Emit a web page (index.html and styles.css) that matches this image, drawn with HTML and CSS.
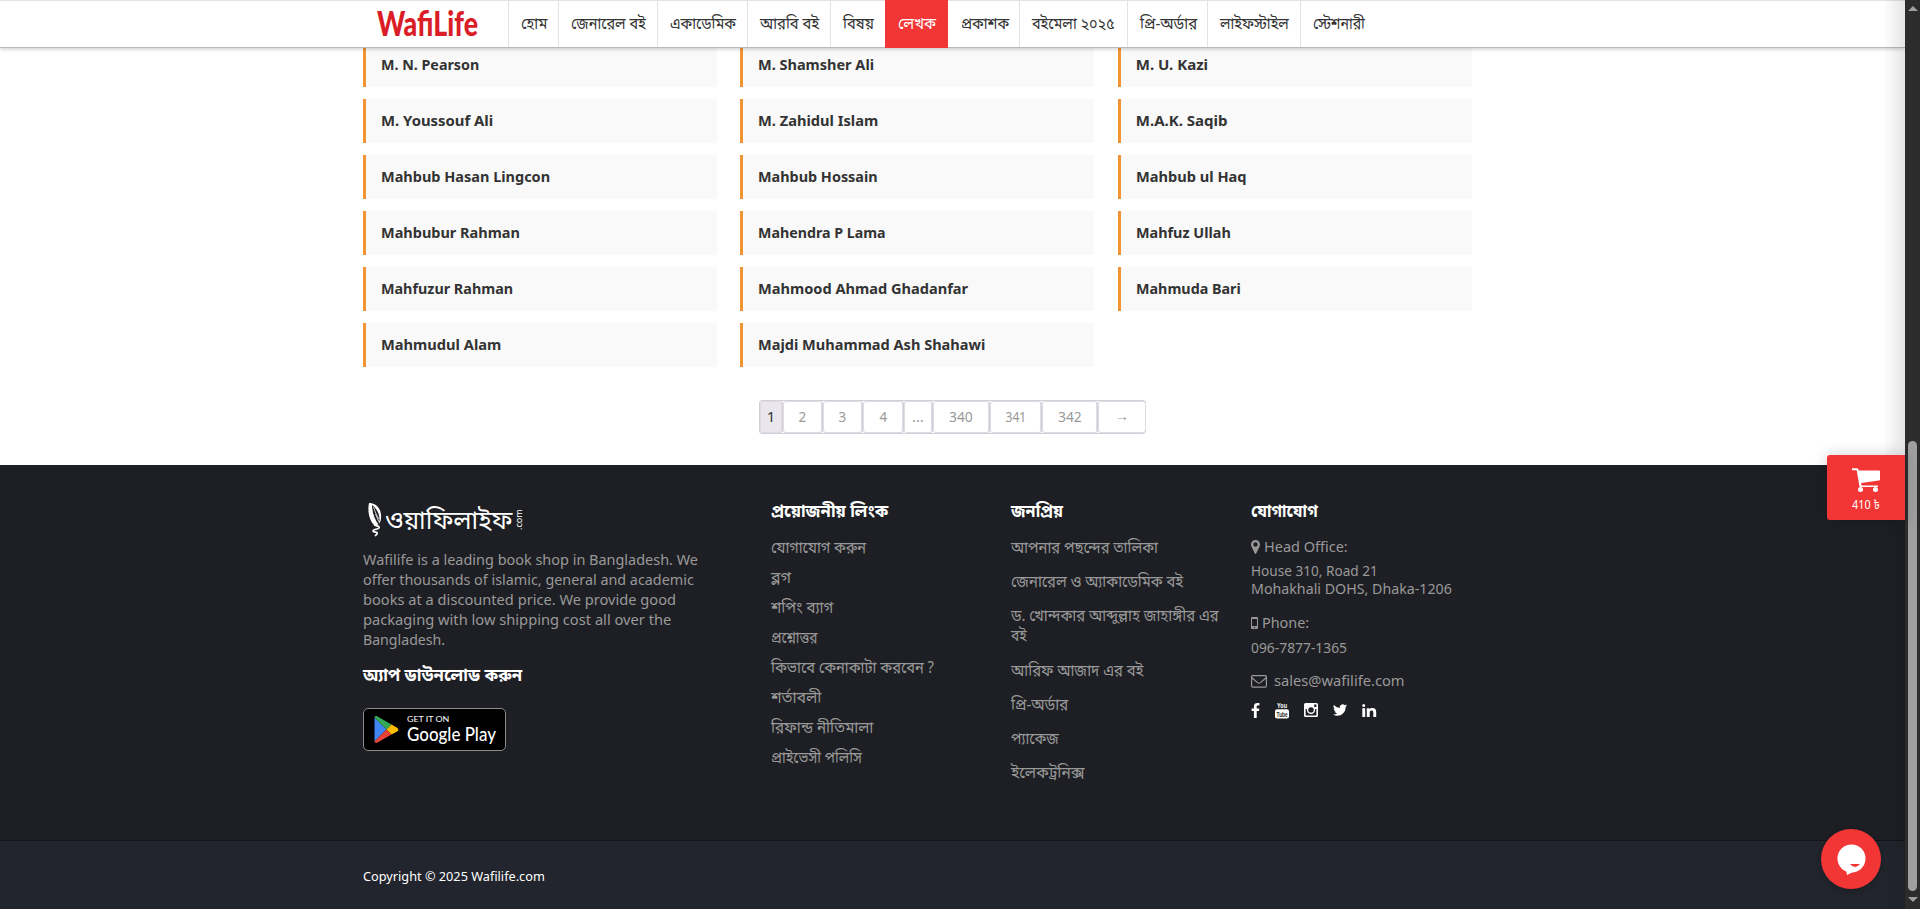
FILE: index.html
```html
<!DOCTYPE html>
<html lang="bn">
<head>
<meta charset="utf-8">
<title>Wafilife</title>
<link rel="stylesheet" href="styles.css">
</head>
<body>
<div class="page">
  <header class="header">
    <svg class="logo" viewBox="0 0 102 32"><text x="0" y="29" font-size="35" textLength="101" lengthAdjust="spacingAndGlyphs">WafiLife</text></svg>
    <nav class="nav">
      <a style="width:50px"><span data-w="26">হোম</span></a>
      <a style="width:99px"><span data-w="75">জেনারেল বই</span></a>
      <a style="width:90px"><span data-w="66">একাডেমিক</span></a>
      <a style="width:83px"><span data-w="59">আরবি বই</span></a>
      <a style="width:55px"><span data-w="31">বিষয়</span></a>
      <a class="active" style="width:63px"><span data-w="38">লেখক</span></a>
      <a style="width:71px"><span data-w="48">প্রকাশক</span></a>
      <a style="width:108px"><span data-w="83">বইমেলা ২০২৫</span></a>
      <a style="width:80px"><span data-w="57">প্রি-অর্ডার</span></a>
      <a style="width:93px"><span data-w="69">লাইফস্টাইল</span></a>
      <a style="width:80px"><span data-w="52">স্টেশনারী</span></a>
    </nav>
  </header>

  <main class="authors">
    <a class="card"><span data-w="98">M. N. Pearson</span></a>
    <a class="card"><span data-w="116">M. Shamsher Ali</span></a>
    <a class="card"><span data-w="72">M. U. Kazi</span></a>
    <a class="card"><span data-w="112">M. Youssouf Ali</span></a>
    <a class="card"><span data-w="120">M. Zahidul Islam</span></a>
    <a class="card"><span data-w="92">M.A.K. Saqib</span></a>
    <a class="card"><span data-w="169">Mahbub Hasan Lingcon</span></a>
    <a class="card"><span data-w="120">Mahbub Hossain</span></a>
    <a class="card"><span data-w="111">Mahbub ul Haq</span></a>
    <a class="card"><span data-w="139">Mahbubur Rahman</span></a>
    <a class="card"><span data-w="128">Mahendra P Lama</span></a>
    <a class="card"><span data-w="95">Mahfuz Ullah</span></a>
    <a class="card"><span data-w="132">Mahfuzur Rahman</span></a>
    <a class="card"><span data-w="210">Mahmood Ahmad Ghadanfar</span></a>
    <a class="card"><span data-w="105">Mahmuda Bari</span></a>
    <a class="card"><span data-w="120">Mahmudul Alam</span></a>
    <a class="card"><span data-w="227">Majdi Muhammad Ash Shahawi</span></a>
  </main>

  <div class="pager">
    <span class="current" style="width:23px">1</span><a style="width:40px"><span data-w="8">2</span></a><a style="width:40px"><span data-w="8">3</span></a><a style="width:41px"><span data-w="8">4</span></a><a style="width:29px">…</a><a style="width:57px"><span data-w="24">340</span></a><a style="width:52px"><span data-w="21">341</span></a><a style="width:56px"><span data-w="24">342</span></a><a class="next" style="width:48px">→</a>
  </div>

  <footer class="footer">
    <section class="about">
      <div class="brand">
        <svg class="feather" viewBox="0 0 16 36"><path d="M2 1C9 1 15 7 14 16C14 21 11 23 8 24C3 20 0 10 2 1Z" fill="#fff"/><path d="M5 3C5 11 8 18 11.5 22.5C14 17 12 8 5 3Z" fill="#1e1f24"/><path d="M6.5 5C8 10 9.5 13 12 17M8.5 12L12 20" fill="none" stroke="#ccc" stroke-width="1"/><path d="M7 23C10 24 13 24 12 26C10 28 6 27 6 29C7 31 11 29 10 32L8 34" fill="none" stroke="#fff" stroke-width="1.7"/></svg>
        <span class="brand-name"><span data-w="127">ওয়াফিলাইফ</span></span>
        <span class="brand-com">.com</span>
      </div>
      <p class="blurb">
        <span data-w="335">Wafilife is a leading book shop in Bangladesh. We</span>
        <span data-w="331">offer thousands of islamic, general and academic</span>
        <span data-w="313">books at a discounted price. We provide good</span>
        <span data-w="308">packaging with low shipping cost all over the</span>
        <span data-w="82">Bangladesh.</span>
      </p>
      <h4 class="app-title"><span data-w="159">অ্যাপ ডাউনলোড করুন</span></h4>
      <a class="store">
        <svg viewBox="0 0 24 27"><path d="M0 1.5V25.5L12 13.5Z" fill="#4285f4"/><path d="M0 1.5C.3 0 1.8-.2 3 .4L17 8.5L12 13.5Z" fill="#34a853"/><path d="M17 8.5L22.6 11.8C24.4 13 24.4 14.3 22.6 15.4L17 18.6L12 13.5Z" fill="#fbbc04"/><path d="M0 25.5C.3 27 1.8 27.2 3 26.6L17 18.6L12 13.5Z" fill="#ea4335"/></svg>
        <span class="store-text"><span class="store-small"><span data-w="42">GET IT ON</span></span><span class="store-big"><span data-w="89">Google Play</span></span></span>
      </a>
    </section>

    <section class="links">
      <h4><span data-w="117">প্রয়োজনীয় লিংক</span></h4>
      <a><span data-w="95">যোগাযোগ করুন</span></a>
      <a><span data-w="20">ব্লগ</span></a>
      <a><span data-w="62">শপিং ব্যাগ</span></a>
      <a><span data-w="46">প্রশ্নোত্তর</span></a>
      <a><span data-w="163">কিভাবে কেনাকাটা করবেন ?</span></a>
      <a><span data-w="50">শর্তাবলী</span></a>
      <a><span data-w="102">রিফান্ড নীতিমালা</span></a>
      <a><span data-w="91">প্রাইভেসী পলিসি</span></a>
    </section>

    <section class="links popular">
      <h4><span data-w="52">জনপ্রিয়</span></h4>
      <a><span data-w="147">আপনার পছন্দের তালিকা</span></a>
      <a><span data-w="172">জেনারেল ও অ্যাকাডেমিক বই</span></a>
      <a><span data-w="208">ড. খোন্দকার আব্দুল্লাহ জাহাঙ্গীর এর</span><br><span data-w="16">বই</span></a>
      <a><span data-w="132">আরিফ আজাদ এর বই</span></a>
      <a><span data-w="57">প্রি-অর্ডার</span></a>
      <a><span data-w="48">প্যাকেজ</span></a>
      <a><span data-w="74">ইলেকট্রনিক্স</span></a>
    </section>

    <section class="contact">
      <h4><span data-w="67">যোগাযোগ</span></h4>
      <p class="row head"><svg width="9" height="14" viewBox="0 0 9 14"><path fill-rule="evenodd" d="M4.5 0A4.5 4.5 0 0 1 9 4.5C9 5.5 8.7 6.2 8.3 7L5.2 13.4Q4.5 14.4 3.8 13.4L.7 7C.3 6.2 0 5.5 0 4.5A4.5 4.5 0 0 1 4.5 0ZM4.5 2.3A2.2 2.2 0 1 0 4.5 6.7A2.2 2.2 0 1 0 4.5 2.3Z"/></svg><span data-w="84">Head Office:</span></p>
      <p class="row addr"><span data-w="127">House 310, Road 21</span><br><span data-w="201">Mohakhali DOHS, Dhaka-1206</span></p>
      <p class="row phone"><svg width="7" height="12" viewBox="0 0 7 12"><path fill-rule="evenodd" d="M1.3 0H5.7Q7 0 7 1.3V10.7Q7 12 5.7 12H1.3Q0 12 0 10.7V1.3Q0 0 1.3 0ZM1 2V9H6V2ZM3.5 9.8A.7.7 0 1 0 3.5 11.2A.7.7 0 1 0 3.5 9.8Z"/></svg><span data-w="47">Phone:</span></p>
      <p class="row number"><span data-w="96">096-7877-1365</span></p>
      <p class="row mail"><svg width="16" height="13" viewBox="0 0 16 13"><g fill="none" stroke="#999" stroke-width="1.2"><rect x=".6" y=".6" width="14.8" height="11.6" rx="1.2"/><path d="M.8 2.8L6.6 7.6Q8 8.7 9.4 7.6L15.2 2.8"/></g></svg><span data-w="131">sales@wafilife.com</span></p>
      <div class="social">
        <svg width="9" height="15" viewBox="0 0 9 15"><path d="M8.4.1V2.5H7C5.9 2.5 5.7 3 5.7 3.8V5.4H8.3L8 8H5.7V15H2.9V8H.6V5.4H2.9V3.4C2.9 1.1 4.3 0 6.4 0Z"/></svg>
        <svg width="14" height="18" viewBox="0 0 14 18"><rect y="8.2" width="14" height="9.3" rx="2"/><text x="2" y="7" textLength="10" lengthAdjust="spacingAndGlyphs" class="yt">You</text><text x="1.6" y="15.8" textLength="11" lengthAdjust="spacingAndGlyphs" class="yt dark">Tube</text></svg>
        <svg width="14" height="14" viewBox="0 0 14 14"><path fill-rule="evenodd" d="M1.6 0H12.4Q14 0 14 1.6V12.4Q14 14 12.4 14H1.6Q0 14 0 12.4V1.6Q0 0 1.6 0ZM1.6 6V11.8Q1.6 12.4 2.2 12.4H11.8Q12.4 12.4 12.4 11.8V6H11.1A4.2 4.2 0 1 1 2.9 6ZM10.2 1.6V4H12.4V1.6ZM7 4.2A2.7 2.7 0 1 0 7 9.6A2.7 2.7 0 1 0 7 4.2Z"/></svg>
        <svg width="14" height="12" viewBox="0 0 14 12"><path d="M14 1.4A5.6 5.6 0 0 1 12.6 2.9C12.8 8 9 11.8 4.4 11.8A8 8 0 0 1 0 10.5A5.8 5.8 0 0 0 4.2 9.3A2.9 2.9 0 0 1 1.6 7.3H2.8A2.9 2.9 0 0 1 .6 4.4L1.9 4.8A2.9 2.9 0 0 1 1 .9A8.2 8.2 0 0 0 6.9 4A2.9 2.9 0 0 1 11.8 1.2L13.6.5Q13.3 1.5 12.5 2Z"/></svg>
        <svg width="15" height="13" viewBox="0 0 15 13"><path d="M.3 4.3H3.2V13H.3ZM4.8 4.3H7.7V5.5C8.3 4.6 9.1 4.1 10.5 4.1C13 4.1 14.2 5.6 14.2 8V13H11.3V8.4C11.3 7.2 10.8 6.5 9.7 6.5C8.4 6.5 7.7 7.3 7.7 8.5V13H4.8ZM1.7 0A1.5 1.5 0 1 1 1.7 3A1.5 1.5 0 1 1 1.7 0Z"/></svg>
      </div>
    </section>
  </footer>
  <div class="bottom"><span data-w="182">Copyright © 2025 Wafilife.com</span></div>
</div>

<div class="edge-shadow"></div>
<aside class="cart">
  <svg width="28" height="24" viewBox="0 0 28 24"><path d="M0 .2H5Q6 .2 6.3 1.2L6.8 2.4H27Q28 2.4 28 3.4V11.5Q28 12.4 27 12.6L9.2 15L9.5 17.4H26V19H8.3Q7.5 19 7.4 18L4.7 2.2H0Z"/><circle cx="8.5" cy="21.5" r="2.5"/><circle cx="23.5" cy="21.5" r="2.5"/></svg>
  <span data-w="28">410 ৳</span>
</aside>
<div class="chat"><svg width="30" height="32" viewBox="0 0 30 32"><circle cx="14.5" cy="14.5" r="14"/><path d="M9 26L10 31L20 26Z"/><path class="smile" d="M13 20H23Q18 26 13 20Z"/></svg></div>
<div class="scrollbar"><i class="up"></i><i class="thumb"></i><i class="down"></i></div>
<script src="fit.js"></script>
</body>
</html>
```
FILE: styles.css
```css
* { box-sizing: border-box; }
html { height: 909px; overflow: hidden; }
body { margin: 0; height: 909px; overflow: hidden; display: flex; background: #fff; font-family: "Noto Sans", "Noto Sans Bengali", "Hind Siliguri", sans-serif; font-size: 15px; color: #333; }
h4, p { margin: 0; }
[data-w] { display: inline-block; white-space: nowrap; transform-origin: 0 50%; }
.page { width: 1905px; height: 909px; overflow: hidden; }

.header { display: flex; height: 48px; padding-left: 377px; border-top: 1px solid #e3e3e3; border-bottom: 1px solid #b9b9b9; box-shadow: 0 1px 4px rgba(0,0,0,.22); background: #fff; position: relative; }
.logo { width: 102px; height: 32px; margin: 6px 29px 0 0; overflow: visible; fill: #da1d26; font-family: Lato, sans-serif; font-weight: 900; }
.nav { display: flex; font-size: 16px; line-height: 44px; }
.nav a { padding-left: 12px; border-left: 1px solid #e3e3e3; height: 46px; }
.nav .active { background: #f23535; color: #fff; height: 48px; margin-top: -1px; padding-top: 1px; border-color: #f23535; }
.nav .active + a { border-color: transparent; }

.authors { display: grid; grid-template-columns: repeat(3, 354px); column-gap: 23.5px; row-gap: 12px; grid-auto-rows: 44px; padding-left: 362.8px; margin-top: -5px; }
.card { border-left: 3px solid #f29434; background: #f9f9f9; padding-left: 15px; font-size: 15px; font-weight: 700; line-height: 42px; }

.pager { display: flex; width: 387px; height: 34px; margin: 33px 0 31px 759px; border: 1px solid #d3ced8; border-radius: 3px; font-size: 15px; }
.pager > * { flex: none; height: 32px; line-height: 30px; text-align: center; color: #999; border-right: 1px solid #d3ced8; border-radius: 3px; box-shadow: inset 0 0 0 1px #dedbe2; }
.pager > :last-child { border-right: 0; }
.pager [data-w] { transform-origin: 50% 50%; }
.pager .current { background: #e9e6ed; color: #333; }
.pager .next { font-size: 14px; }

.footer { display: flex; height: 375px; padding: 32px 0 0 363px; background: #1e1f24; color: #999; }
.footer h4 { color: #fff; font-size: 18px; font-weight: 700; line-height: 26px; }
.about { width: 407px; }
.brand { display: flex; height: 46px; padding: 5px 0 0 4px; color: #fff; }
.feather { width: 16px; height: 36px; }
.brand-name { width: 130px; font-size: 26px; line-height: 35px; padding-left: 2px; }
.brand-com { writing-mode: vertical-rl; transform: rotate(180deg); font-size: 9px; line-height: 10px; height: 23px; margin: 5px 0 0 1px; }
.blurb { margin-top: 6px; line-height: 20px; font-size: 15px; }
.blurb span { display: block; width: max-content; }
.footer .app-title { margin-top: 12px; }
.store { display: flex; width: 143px; height: 43px; margin-top: 21px; padding: 7px 0 0 10px; border: 1px solid #8a8a8a; border-radius: 5px; background: #000; color: #fff; }
.store svg { width: 25px; height: 27px; flex: none; }
.store-text { display: flex; flex-direction: column; margin-left: 8px; font-family: Lato, sans-serif; }
.store-small { font-size: 8px; line-height: 8px; margin-top: -1px; }
.store-big { font-size: 20px; line-height: 21px; font-weight: 500; }
.links { width: 240px; display: flex; flex-direction: column; padding-left: 1px; }
.links h4 { margin-bottom: 9px; }
.links a { font-size: 15.5px; line-height: 20px; padding: 5px 0; height: 30px; }
.popular a { padding: 5px 0 9.2px; height: auto; }
.popular span { height: 20px; vertical-align: top; }
.contact { padding-left: 1px; }
.contact h4 { margin-bottom: 14px; }
.contact .row { line-height: 18px; }
.row svg { fill: #999; vertical-align: -2px; }
.head svg { margin-right: 4px; }
.contact .addr { margin-top: 6px; }
.contact .phone { margin-top: 16px; }
.phone svg { margin-right: 4px; vertical-align: -1px; }
.contact .number { margin-top: 7px; }
.contact .mail { margin-top: 15px; }
.mail svg { margin-right: 7px; }
.social { display: flex; align-items: center; height: 20px; margin-top: 11px; gap: 15px; fill: #fff; }
.yt { font: 700 7px "Liberation Sans", sans-serif; }
.dark { fill: #1e1f24; }
.bottom { height: 69px; background: #22252d; border-top: 1px solid #14151a; padding: 25px 0 0 363px; color: #fff; font-size: 13px; line-height: 20px; }

.edge-shadow { position: absolute; left: 1883px; top: 0; width: 22px; height: 909px; background: linear-gradient(to right, rgba(0,0,0,0), rgba(0,0,0,.1)); }
.cart { position: absolute; left: 1827px; top: 455px; width: 78px; height: 65px; padding-left: 25px; background: #f23535; border-radius: 3px 0 0 3px; color: #fff; fill: #fff; box-shadow: 0 0 15px rgba(0,0,0,.18); font-size: 12px; line-height: 16px; }
.cart svg { display: block; margin: 13px 0 5px; }
.chat { position: absolute; left: 1821px; top: 829px; width: 60px; height: 60px; border-radius: 50%; background: #f23535; padding: 15px 0 0 16px; fill: #fff; box-shadow: 0 1px 8px rgba(0,0,0,.25); }
.smile { fill: #f23535; }
.scrollbar { display: flex; flex-direction: column; align-items: center; width: 15px; height: 909px; background: #2c2c2c; }
.up { border: 5px solid transparent; border-top: 0; border-bottom-color: #9f9f9f; margin-top: 6px; }
.thumb { width: 9px; height: 450px; border-radius: 5px; background: #9f9f9f; margin-top: 430px; }
.down { border: 5px solid transparent; border-bottom: 0; border-top-color: #9f9f9f; margin-top: 6px; }
```
FILE: fit.js
```js
// Condense each label to its designed measure, in pixels.
document.querySelectorAll('[data-w]').forEach(function (el) {
  el.style.transform = 'scaleX(' + (el.dataset.w / el.offsetWidth) + ')';
});
```
